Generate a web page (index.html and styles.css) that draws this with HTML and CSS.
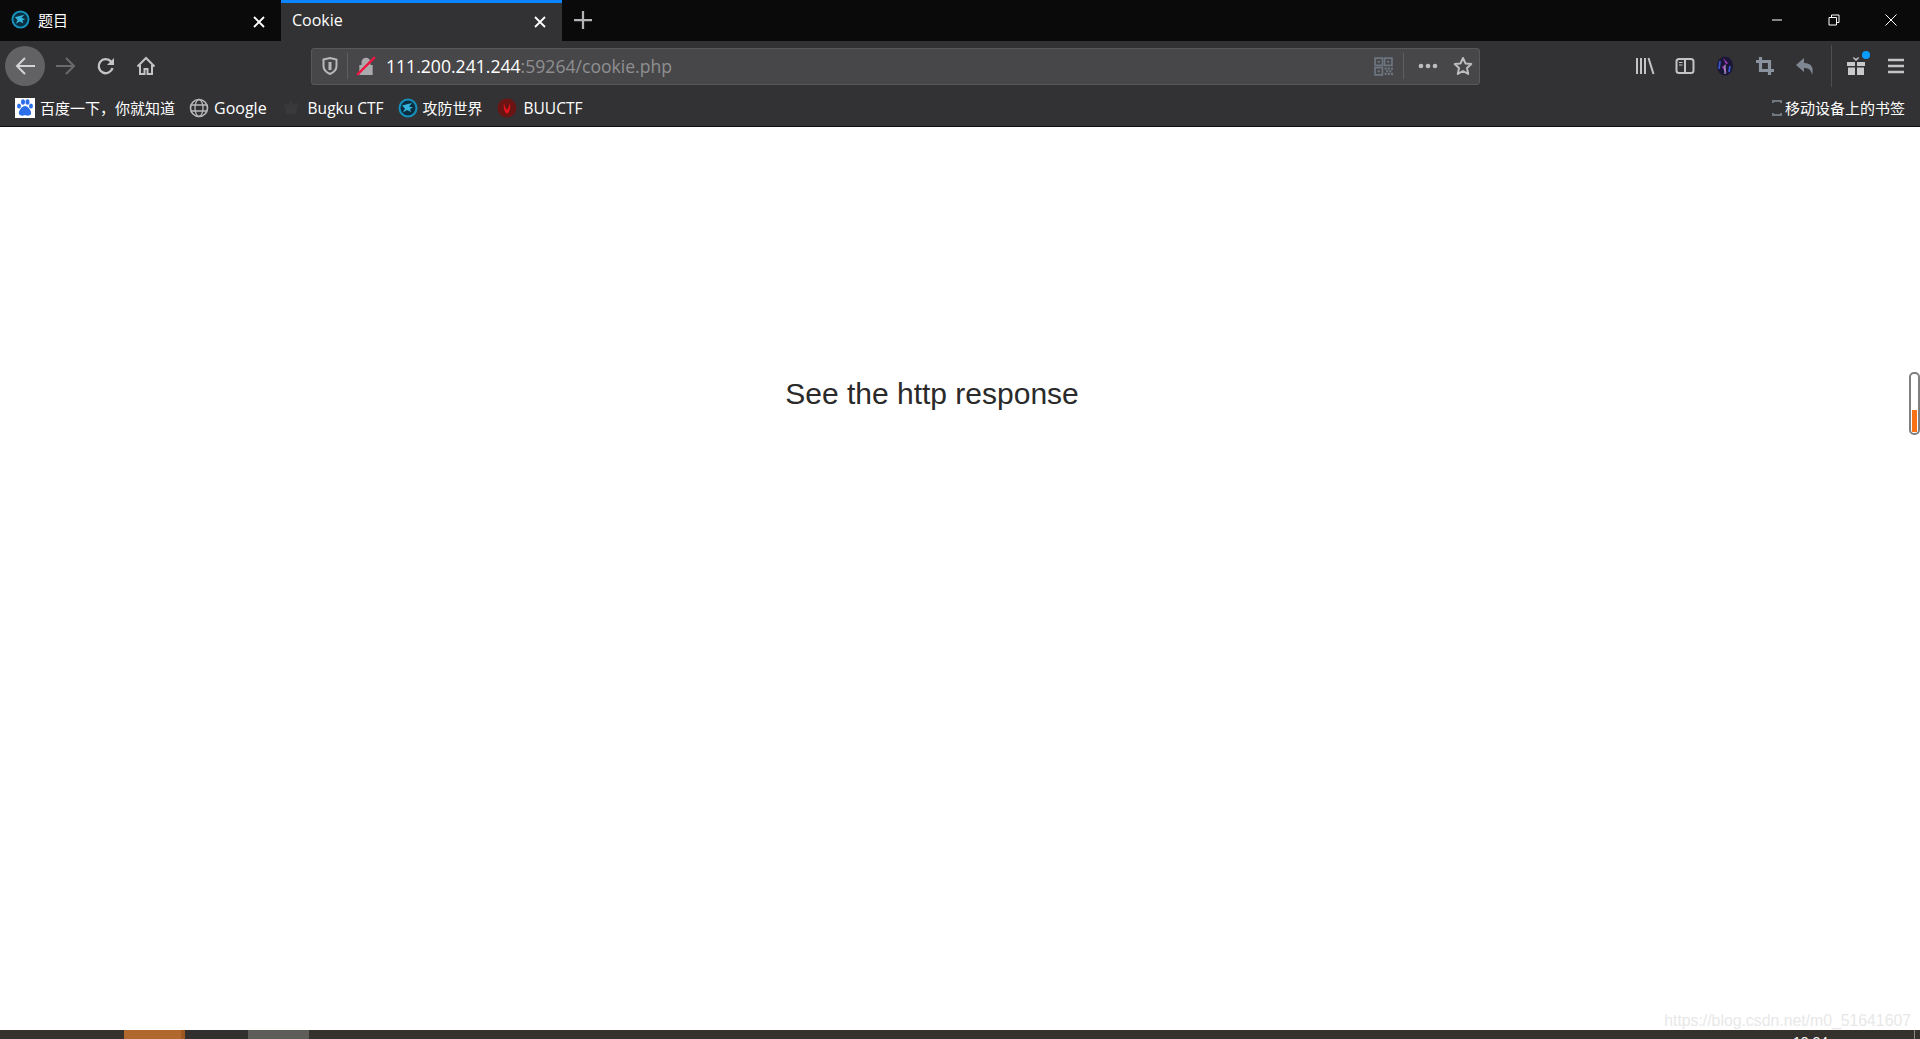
FILE: index.html
```html
<!DOCTYPE html>
<html lang="en">
    <head>
        <meta charset="UTF-8">
        <meta name="viewport" content="width=device-width, initial-scale=1.0">
        <title>Cookie</title>
        <link rel="stylesheet" href="styles.css">
    </head>
    <body>
        <!-- tabs -->
        <div class="tabbar">
            <div class="tab">
                <svg class="fav" viewBox="0 0 20 20"><circle cx="10" cy="10" r="8.500" fill="#0b2f40" stroke="#1591bd" stroke-width="2"/><path d="M4 7.500l10-2.500-3 3.500 4 1-3 1.500 1 3-4-2-4 2.500 2-4z" fill="#35b4dd"/></svg>
                <span class="tab-title">题目</span>
                <svg class="tab-close" viewBox="0 0 12 12"><path d="M1 1l10 10M11 1L1 11" stroke="#fff" stroke-width="1.800"/></svg>
            </div>
            <div class="tab active">
                <span class="tab-title latin">Cookie</span>
                <svg class="tab-close" viewBox="0 0 12 12"><path d="M1 1l10 10M11 1L1 11" stroke="#fff" stroke-width="1.800"/></svg>
            </div>
            <div class="new-tab">
                <svg viewBox="0 0 16 16"><path d="M8 0v16M0 8h16" stroke="#b4b4b6" stroke-width="2"/></svg>
            </div>
            <div class="window-btns">
                <svg viewBox="0 0 12 12"><path d="M1 6h10" stroke="#fff" stroke-width="1"/></svg>
                <svg viewBox="0 0 12 12"><path d="M3.500 3V1h7.500v7.500H8.500M1 3.500h7.500V11H1z" fill="none" stroke="#fff" stroke-width="1"/></svg>
                <svg viewBox="0 0 12 12"><path d="M.5.500l11 11M11.500.500l-11 11" stroke="#fff" stroke-width="1"/></svg>
            </div>
        </div>

        <!-- navigation -->
        <div class="navbar">
            <div class="nav-left">
                <div class="back">
                    <svg viewBox="0 0 20 20"><path d="M20 10H2M10 2l-8 8 8 8" fill="none" stroke="#d4d4d5" stroke-width="2"/></svg>
                </div>
                <svg class="nav-icon" viewBox="0 0 20 20"><path d="M0 10h18M10 2l8 8-8 8" fill="none" stroke="#6a6a6c" stroke-width="2"/></svg>
                <svg class="nav-icon" viewBox="0 0 20 20"><path d="M16.500 12a7 7 0 1 1-1.500-6.500L17 8" fill="none" stroke="#c4c4c6" stroke-width="2.400"/><path d="M18 2v7h-7z" fill="#c4c4c6"/></svg>
                <svg class="nav-icon" viewBox="0 0 20 20"><path d="M1.500 10.500L10 2l8.500 8.500M4 9v9h4.500v-5h3v5H16V9" fill="none" stroke="#c4c4c6" stroke-width="2"/></svg>
            </div>
            <div class="urlbar">
                <svg class="url-shield" viewBox="0 0 16 18"><path d="M1.500 2.500L8 1l6.500 1.500V9c0 4-3 6.500-6.500 8C4.500 15.500 1.500 13 1.500 9z" fill="none" stroke="#b8b8ba" stroke-width="2"/><path d="M6.500 5h3v8h-3z" fill="#b8b8ba"/></svg>
                <span class="url-sep"></span>
                <svg class="url-lock" viewBox="0 0 18 18"><path d="M5 8V5.500a4 4 0 0 1 8 0V8h2v9H3V8z" fill="#aaaaac"/><path d="M1 17L17 1" stroke="#f0163f" stroke-width="2"/></svg>
                <span class="url-text"><span class="url-host">111.200.241.244</span>:59264/cookie.php</span>
                <svg class="url-qr" viewBox="0 0 18 18"><path d="M1 1h7v7H1zM10 1h7v7h-7zM1 10h7v7H1z" fill="none" stroke="#6d7680" stroke-width="1.600"/><path d="M3.500 3.500h2v2h-2zM12.500 3.500h2v2h-2zM3.500 12.500h2v2h-2zM10 10h2v2h-2zM13 10h2v2h-2zM16 10h2v2h-2zM11.500 12.500h2v2h-2zM14.500 12.500h2v2h-2zM10 15h2v2h-2zM13 15h2v2h-2zM16 15h2v2h-2z" fill="#6d7680"/></svg>
                <span class="url-sep"></span>
                <svg class="url-dots" viewBox="0 0 20 6"><circle cx="3" cy="3" r="2.300" fill="#bdbdbf"/><circle cx="10" cy="3" r="2.300" fill="#bdbdbf"/><circle cx="17" cy="3" r="2.300" fill="#bdbdbf"/></svg>
                <svg class="url-star" viewBox="0 0 20 20"><path d="M10 2l2.500 5.400 5.800.700-4.300 4 1.200 5.800L10 15l-5.200 2.900L6 12.100l-4.300-4 5.800-.700z" fill="none" stroke="#bdbdbf" stroke-width="2" stroke-linejoin="round"/></svg>
            </div>
            <div class="nav-right">
                <svg class="nav-icon" viewBox="0 0 20 20"><path d="M2 2v16M6 2v16M10 2v16M13.500 2l5 16" fill="none" stroke="#c4c4c6" stroke-width="2"/></svg>
                <svg class="nav-icon" viewBox="0 0 20 20"><rect x="1.500" y="3" width="17" height="14" rx="2.500" fill="none" stroke="#c4c4c6" stroke-width="2"/><path d="M10 3v14" stroke="#c4c4c6" stroke-width="2"/><path d="M4 6.500h3.500M4 9h3.500" stroke="#c4c4c6" stroke-width="1.200"/></svg>
                <svg class="nav-icon" viewBox="0 0 20 20"><ellipse cx="10" cy="10" rx="8" ry="9.500" fill="#1b1638"/><path d="M8 2l5 5-4 3 3 8-5-7 4-3z" fill="#a83cc0"/><path d="M5 5l-1 8M15 10l-1 6" stroke="#3a56c8" stroke-width="1.800"/><path d="M10 9v9" stroke="#c9c9e0" stroke-width="1"/></svg>
                <svg class="nav-icon" viewBox="0 0 20 20"><path d="M5.500 1v13.500H19M1 5.500h13.500V19" fill="none" stroke="#8a939d" stroke-width="3.200"/></svg>
                <svg class="nav-icon" viewBox="0 0 20 20"><path d="M9 2L1 9l8 7v-4c4 0 7 1 8 7 2-7 0-12-8-12z" fill="#7e8791"/></svg>
                <span class="nav-sep"></span>
                <div class="gift">
                    <svg class="nav-icon" viewBox="0 0 20 20"><path d="M1 6h8v4H1zM11 6h8v4h-8zM2 11.500h7V19H2zM11 11.500h7V19h-7z" fill="#c9c9cb"/><path d="M10 5L6.500 1.500h2L10 3l1.500-1.500h2z" fill="#c9c9cb"/></svg>
                    <span class="gift-dot"></span>
                </div>
                <svg class="nav-icon" viewBox="0 0 20 20"><path d="M2 4h16M2 10h16M2 16h16" stroke="#c4c4c6" stroke-width="2.400"/></svg>
            </div>
        </div>

        <!-- bookmarks -->
        <div class="bookmarks">
            <div class="bm">
                <svg class="bm-icon" viewBox="0 0 20 20"><rect width="20" height="20" fill="#fff"/><g fill="#2d6fe8"><ellipse cx="4" cy="8" rx="2" ry="2.600"/><ellipse cx="8" cy="4" rx="2" ry="2.800"/><ellipse cx="12.500" cy="4" rx="2" ry="2.800"/><ellipse cx="16" cy="8" rx="2" ry="2.600"/><path d="M10 8c3 0 7 5 6 8-1 2-4 2-6 1-2 1-5 1-6-1-1-3 3-8 6-8z"/></g></svg>
                <span>百度一下，你就知道</span>
            </div>
            <div class="bm">
                <svg class="bm-icon" viewBox="0 0 20 20"><circle cx="10" cy="10" r="8.500" fill="none" stroke="#b9b9bb" stroke-width="1.600"/><ellipse cx="10" cy="10" rx="4" ry="8.500" fill="none" stroke="#b9b9bb" stroke-width="1.300"/><path d="M2 7h16M2 13h16" stroke="#b9b9bb" stroke-width="1.300"/></svg>
                <span class="latin">Google</span>
            </div>
            <div class="bm bm-wide">
                <svg class="bm-icon" viewBox="0 0 20 20"><path d="M3 4l4 3 3-4 3 4 4-3-2 12H5z" fill="#39393b"/></svg>
                <span class="latin-small">Bugku CTF</span>
            </div>
            <div class="bm">
                <svg class="bm-icon" viewBox="0 0 20 20"><circle cx="10" cy="10" r="8.500" fill="#0b2f40" stroke="#1591bd" stroke-width="2"/><path d="M4 7.500l10-2.500-3 3.500 4 1-3 1.500 1 3-4-2-4 2.500 2-4z" fill="#35b4dd"/></svg>
                <span>攻防世界</span>
            </div>
            <div class="bm bm-wide">
                <svg class="bm-icon" viewBox="0 0 20 20"><circle cx="10" cy="10" r="9.500" fill="#6b1414"/><path d="M7 5c-1 6 1 9 3 11 2-2 4-5 3-11-1 4-2 6-3 7-1-1-2-3-3-7z" fill="#e8141e"/></svg>
                <span class="latin-small">BUUCTF</span>
            </div>
            <div class="bm bm-mobile">
                <svg class="bm-phone" viewBox="0 0 10 16"><path d="M1 3V1h8v2M1 13v2h8v-2" fill="none" stroke="#6e7680" stroke-width="2"/></svg>
                <span>移动设备上的书签</span>
            </div>
        </div>

        <!-- page -->
        <main class="page">
            <p class="message">See the http response</p>
            <div class="side-meter"><span class="side-meter-fill"></span></div>
            <span class="watermark">https://blog.csdn.net/m0_51641607</span>
        </main>

        <!-- taskbar sliver -->
        <div class="taskbar">
            <span class="task task-orange"></span>
            <span class="task task-dark"></span>
            <span class="task task-grey"></span>
            <span class="task-clock">13:24</span>
            <span class="task-edge"></span>
        </div>
    </body>
</html>
```

FILE: styles.css
```css
*{
    margin: 0;
    padding: 0;
    box-sizing: border-box;
}
html,body{
    height: 100%;
}
body{
    display: flex;
    flex-direction: column;
    overflow: hidden;
    background-color: #ffffff;
    font-family: "Liberation Sans", "Noto Sans CJK SC", sans-serif;
}
.latin{
    font-size: 16px;
}
.latin-small{
    font-size: 15.500px;
}

/* tabs */
.tabbar{
    display: flex;
    height: 41px;
    background-color: #0a0a0b;
    color: #ffffff;
    font-family: "Open Sans", "Noto Sans CJK SC", sans-serif;
    font-size: 15px;
}
.tab{
    display: flex;
    align-items: center;
    width: 281px;
    padding: 0 16px 2px 11px;
}
.tab.active{
    background-color: #323234;
    border-top: 3px solid #0a84ff;
    padding-bottom: 5px;
}
.fav{
    width: 19px;
    height: 19px;
    margin-right: 8px;
}
.tab-title{
    flex: 1;
}
.tab-close{
    width: 12px;
    height: 12px;
    margin-top: 4px;
}
.new-tab{
    display: flex;
    align-items: center;
    padding: 0 12px 2px;
}
.new-tab svg{
    width: 18px;
    height: 18px;
}
.window-btns{
    display: flex;
    align-items: center;
    gap: 45px;
    margin-left: auto;
    padding: 0 23px 2px 0;
}
.window-btns svg{
    width: 12px;
    height: 12px;
}

/* navigation */
.navbar{
    display: flex;
    align-items: center;
    height: 51px;
    background-color: #323234;
    padding-bottom: 1px;
}
.nav-left{
    display: flex;
    align-items: center;
    gap: 20px;
    width: 311px;
    padding-left: 5px;
}
.back{
    display: flex;
    align-items: center;
    justify-content: center;
    width: 40px;
    height: 40px;
    margin-right: -9px;
    border-radius: 50%;
    background-color: #626264;
}
.back svg{
    width: 20px;
    height: 20px;
}
.nav-icon{
    width: 20px;
    height: 20px;
    flex-shrink: 0;
}
.urlbar{
    display: flex;
    align-items: center;
    width: 1169px;
    height: 37px;
    background-color: #474749;
    border: 1px solid #58585a;
    border-radius: 3px;
    padding: 0 6px 0 10px;
}
.url-shield{
    width: 16px;
    height: 18px;
    margin-right: 9px;
}
.url-sep{
    width: 1px;
    height: 26px;
    background-color: #5f5f61;
}
.url-lock{
    width: 20px;
    height: 20px;
    margin: 0 10px 0 8px;
}
.url-text{
    flex: 1;
    font-family: "Open Sans", sans-serif;
    font-size: 17.600px;
    color: #8f8f91;
}
.url-host{
    color: #ffffff;
}
.url-qr{
    width: 19px;
    height: 19px;
    margin-right: 10px;
}
.url-dots{
    width: 20px;
    height: 6px;
    margin: 0 15px 0 14px;
}
.url-star{
    width: 20px;
    height: 20px;
}
.nav-right{
    display: flex;
    align-items: center;
    gap: 20px;
    margin-left: auto;
    padding-right: 14px;
}
.nav-sep{
    width: 1px;
    height: 42px;
    margin: 0 -6px 0 -4px;
    background-color: #4e4e50;
}
.gift{
    position: relative;
    display: flex;
}
.gift-dot{
    position: absolute;
    top: -5px;
    right: -4px;
    width: 8px;
    height: 8px;
    border-radius: 50%;
    background-color: #0a9dff;
}

/* bookmarks */
.bookmarks{
    display: flex;
    align-items: center;
    height: 35px;
    padding: 0 15px 3px;
    background-color: #323234;
    border-bottom: 1px solid #0c0c0c;
    color: #ffffff;
    font-family: "Open Sans", "Noto Sans CJK SC", sans-serif;
    font-size: 15px;
    gap: 14px;
}
.bm{
    display: flex;
    align-items: center;
    gap: 5px;
}
.bm-wide{
    gap: 7px;
}
.bm-icon{
    width: 20px;
    height: 20px;
}
.bm-mobile{
    gap: 3px;
    margin-left: auto;
}
.bm-phone{
    width: 10px;
    height: 16px;
}

/* page */
.page{
    position: relative;
    flex: 1;
    display: flex;
    justify-content: center;
    padding: 249px 56px 0 0;
    background-color: #ffffff;
}
.message{
    font-size: 30px;
    line-height: 36px;
    color: #2a2a2a;
}
.side-meter{
    position: absolute;
    top: 245px;
    right: 0;
    width: 11px;
    height: 63px;
    border: 2px solid #7f7f7f;
    border-radius: 5px;
    background-color: #ffffff;
}
.side-meter-fill{
    position: absolute;
    left: 1px;
    right: 1px;
    bottom: 1px;
    height: 22px;
    background-color: #f97316;
}
.watermark{
    position: absolute;
    right: 9px;
    bottom: -1px;
    font-size: 15.800px;
    line-height: 20px;
    color: #e8e8e8;
}

/* taskbar sliver */
.taskbar{
    position: relative;
    display: flex;
    height: 9px;
    flex-shrink: 0;
    overflow: hidden;
    padding-left: 124px;
    background-color: #35322d;
}
.task{
    height: 100%;
}
.task-orange{
    width: 61px;
    background-color: #b0682c;
    border-right: 4px solid #9c5722;
}
.task-dark{
    width: 63px;
    background-color: #31302e;
}
.task-grey{
    width: 61px;
    background-color: #5e5d5a;
}
.task-clock{
    position: absolute;
    right: 92px;
    top: 5px;
    color: #ffffff;
    font-size: 14px;
    line-height: 14px;
}
.task-edge{
    position: absolute;
    top: 0;
    right: 5px;
    width: 1px;
    height: 100%;
    background-color: #8a8a88;
}
```
